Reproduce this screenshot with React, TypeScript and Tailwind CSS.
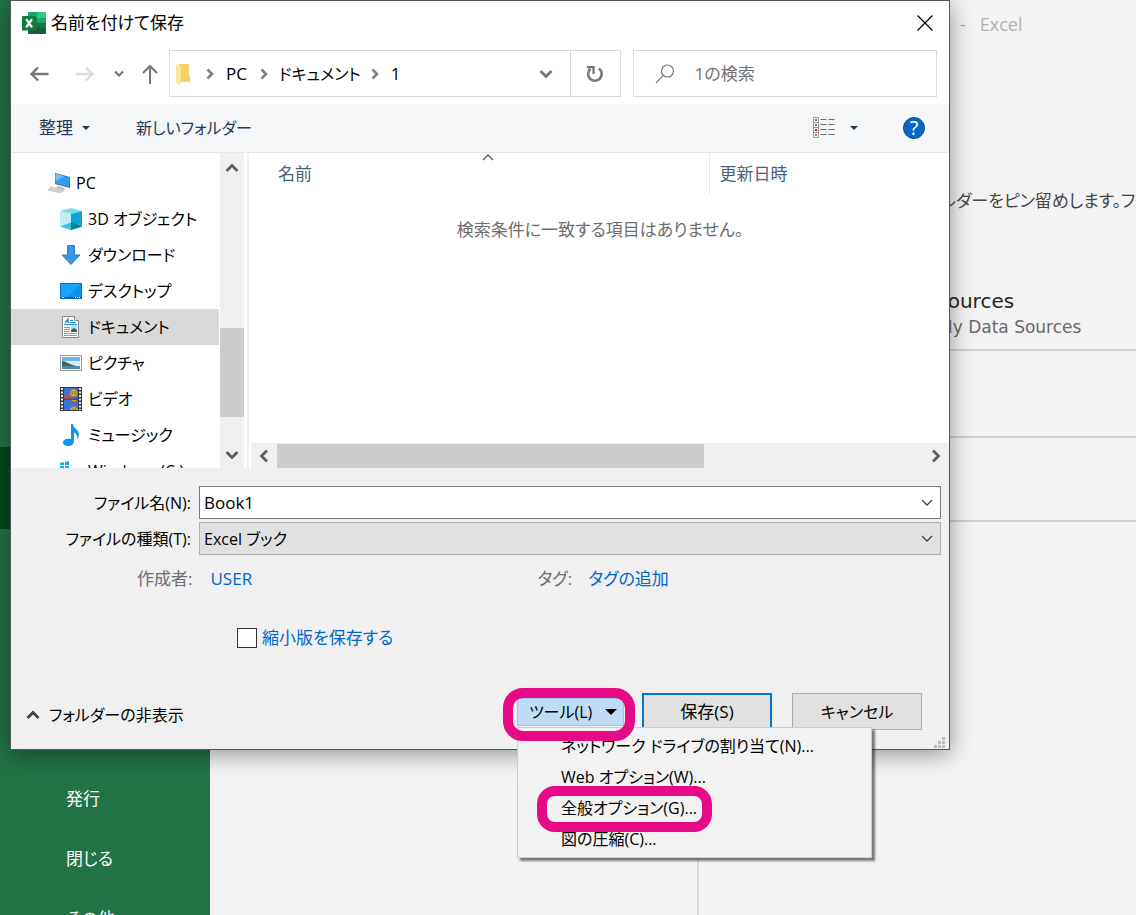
import React from "react";

type IconProps = { className?: string };

function ExcelIcon() {
  return (
    <svg width="24" height="22" viewBox="0 0 24 22" aria-hidden="true">
      <path d="M6 1a1 1 0 0 1 1-1h8v6H6z" fill="#21a366" />
      <path d="M15 0h8a1 1 0 0 1 1 1v5h-9z" fill="#33c481" />
      <path d="M6 6h9v5H6z" fill="#107c41" />
      <path d="M15 6h9v5h-9z" fill="#21a366" />
      <path d="M6 11h9v5H6z" fill="#185c37" />
      <path d="M15 11h9v5h-9z" fill="#107c41" />
      <path d="M6 16h18v5a1 1 0 0 1-1 1H7a1 1 0 0 1-1-1z" fill="#185c37" />
      <rect y="4" width="14.500" height="14.500" rx="1" fill="#107c41" />
      <path d="M4.200 7.200 10 15.400M10 7.200 4.200 15.400" stroke="#fff" strokeWidth="2.200" />
    </svg>
  );
}

function Chevron({ className }: IconProps) {
  return (
    <svg width="16" height="16" viewBox="0 0 16 16" fill="none" stroke="currentColor" className={className} aria-hidden="true">
      <path d="M2.500 5 8 10.500 13.500 5" strokeWidth="2.800" />
    </svg>
  );
}

function ThinChevron({ className }: IconProps) {
  return (
    <svg width="12" height="8" viewBox="0 0 12 8" fill="none" stroke="currentColor" className={className} aria-hidden="true">
      <path d="M1 1 6 6 11 1" strokeWidth="1.300" />
    </svg>
  );
}

function Crumb() {
  return (
    <svg width="8" height="12" viewBox="0 0 8 12" fill="none" aria-hidden="true">
      <path d="M1.500 1.500 6 6 1.500 10.500" stroke="#808080" strokeWidth="2.600" />
    </svg>
  );
}

function Triangle({ className }: IconProps) {
  return (
    <svg width="8" height="4" viewBox="0 0 8 4" className={className} aria-hidden="true">
      <path d="M0 0h8L4 4z" fill="currentColor" />
    </svg>
  );
}

function PcIcon() {
  return (
    <svg width="24" height="22" viewBox="0 0 24 22" aria-hidden="true">
      <path d="M7 1 22 5v11L7 12z" fill="#5a6670" />
      <path d="M7.500 1.800 21.300 5.500v9.300L7.500 11.300z" fill="#2f9df4" />
      <path d="m7.500 1.800 9 2.400-9 5z" fill="#6cc0fb" />
      <path d="m10 14 7 2-1 2-8-2z" fill="#b8bec4" />
      <path d="m3 15 13 3.500-4 2.500-12-3z" fill="#cdd1d5" stroke="#a5abb1" strokeWidth=".7" strokeDasharray="2 1" />
    </svg>
  );
}

function CubeIcon() {
  return (
    <svg width="22" height="22" viewBox="0 0 22 22" aria-hidden="true">
      <path d="M0 3 11 0l11 3-11 3z" fill="#7fdde3" />
      <path d="M0 3 11 6v16L0 18.500z" fill="#bdeef1" />
      <path d="M22 3 11 6v16l11-3.500z" fill="#0ba4dc" />
      <path d="m0 18.500 11-4V22z" fill="#35c5dc" />
      <path d="m22 18.500-11-4V22z" fill="#077f99" />
    </svg>
  );
}

function DownloadIcon() {
  return (
    <svg width="22" height="22" viewBox="0 0 22 22" aria-hidden="true">
      <path d="M7.500 1.500h7V11H20l-9 9.500L2 11h5.500z" fill="#3a96e8" stroke="#2a7dcb" />
    </svg>
  );
}

function DesktopIcon() {
  return (
    <svg width="22" height="22" viewBox="0 0 22 22" aria-hidden="true">
      <rect x=".5" y="3.500" width="21" height="15" fill="#1ba3fc" stroke="#0d6fb8" />
      <path d="m21 4-14 13h14z" fill="#0a93f2" />
      <path d="M1 17.500h20" stroke="#075a9c" />
      <path d="M2 17.500h2M15 17.500h1M17 17.500h1M19 17.500h1" stroke="#fff" />
    </svg>
  );
}

function DocumentIcon() {
  return (
    <svg width="22" height="22" viewBox="0 0 22 22" aria-hidden="true">
      <path d="M2.500.5h12l4 4v17h-16z" fill="#fff" stroke="#8a8a8a" />
      <path d="M14.500.5v4h4" fill="#e6e6e6" stroke="#8a8a8a" />
      <path d="m5 7 3-4v4" fill="none" stroke="#2b86cf" strokeWidth="1.300" />
      <path d="M10 4.500h3M10 6.500h6M4 8.500h13" stroke="#2196e3" />
      <path d="M4 11.500h6M4 13.500h6M4 15.500h6M4 17.500h13M4 19.500h13" stroke="#9b9b9b" />
      <path d="M11 10h6v6h-6z" fill="#b9dcf5" />
      <path d="m11 14 3-2 3 2v2h-6z" fill="#34597a" />
    </svg>
  );
}

function PictureIcon() {
  return (
    <svg width="22" height="22" viewBox="0 0 22 22" aria-hidden="true">
      <rect x=".5" y="3.500" width="21" height="15" fill="#fff" stroke="#9a9a9a" />
      <path d="M2 5h18v12H2z" fill="#72b2ea" />
      <path d="M2 9h18v5H2z" fill="#d9ecf7" />
      <path d="M2 9c4 .5 7 3 14 5H2z" fill="#3a6a4b" />
      <path d="M2 14h18v3H2z" fill="#4f8aa8" />
    </svg>
  );
}

function VideoIcon() {
  return (
    <svg width="22" height="24" viewBox="0 0 22 24" aria-hidden="true">
      <path d="M0 0h22v24H0z" fill="#3a3a3a" />
      <path d="M2 1v22M20 1v22" stroke="#e9e9e9" strokeWidth="2" strokeDasharray="2 1.500" />
      <path d="M4 1h14v10.500H4zM4 12.500h14V23H4z" fill="#3c74d8" />
      <circle cx="13.500" cy="6" r="3.500" fill="#e5b61f" />
      <path d="M4 10c2-4 3-2 6 0l4-1v2.500H4z" fill="#d94a35" />
      <path d="M12 4v4M15 4v4" stroke="#8c4a10" />
      <path d="M11 13h6l-3 4z" fill="#d8482f" />
      <path d="M11.500 13h5L14 14.500z" fill="#e5b61f" />
      <path d="M10.500 23a3.500 3.500 0 0 1 7 0z" fill="#e5b61f" />
      <path d="M13 20v3M15.500 20v3" stroke="#d8482f" />
    </svg>
  );
}

function MusicIcon() {
  return (
    <svg width="22" height="22" viewBox="0 0 22 22" aria-hidden="true">
      <path d="M11 0h2c.5 5 6 5 6 11 0 2-.8 3-2 4.500.8-4-.5-6-3-7V17c0 3-2.500 5-6 5-3 0-5-1.300-5-3.500C3 15.500 7 14 11 15z" fill="#0f96ee" />
    </svg>
  );
}

function DriveIcon() {
  return (
    <svg width="22" height="22" viewBox="0 0 22 22" aria-hidden="true">
      <path d="m0 3 4-1v3H0zM5 2l4-1v4H5zM0 6h4v3H0zM5 6h4v4H5z" fill="#11a9ef" />
      <path d="M0 11h22v7H0z" fill="#a7adb2" />
    </svg>
  );
}

const places = [
  { name: "3D オブジェクト", icon: <CubeIcon /> },
  { name: "ダウンロード", icon: <DownloadIcon /> },
  { name: "デスクトップ", icon: <DesktopIcon /> },
  { name: "ドキュメント", icon: <DocumentIcon />, selected: true },
  { name: "ピクチャ", icon: <PictureIcon /> },
  { name: "ビデオ", icon: <VideoIcon /> },
  { name: "ミュージック", icon: <MusicIcon /> },
  { name: "Windows (C:)", icon: <DriveIcon /> },
];

const toolItems = [
  { name: "ネットワーク ドライブの割り当て(N)..." },
  { name: "Web オプション(W)..." },
  { name: "全般オプション(G)...", marked: true },
  { name: "図の圧縮(C)..." },
];

function Backstage() {
  return (
    <div className="flex h-full">
      <nav className="flex w-[210px] shrink-0 flex-col overflow-hidden bg-[#217346] text-[17px] text-white">
        <div className="h-[447px] shrink-0" />
        <div className="h-[82px] shrink-0 bg-[#004b1c]" />
        <div className="h-60 shrink-0" />
        {["発行", "閉じる", "その他"].map((name) => (
          <a key={name} href="#" className="flex h-[60px] shrink-0 items-center pl-[66px]">
            {name}
          </a>
        ))}
      </nav>
      <main className="flex min-w-0 flex-1 flex-col bg-[#f3f3f3]">
        <div className="flex h-12 shrink-0 items-center gap-[14px] pl-[750px] text-lg text-[#b1b1b1]">
          <span>-</span>
          <span>Excel</span>
        </div>
        <div className="flex h-[303px] shrink-0 flex-col justify-between overflow-hidden whitespace-nowrap border-b-2 border-[#d0d0d0] pt-[139px]">
          <p className="pl-[730px] text-[17px] leading-7 text-[#444]">ルダーをピン留めします。フォルダー</p>
          <div className="flex flex-col pb-[10px] font-['DejaVu_Sans']">
            <span className="pl-[725px] text-xl leading-7 text-[#262626]">Sources</span>
            <span className="pl-[728px] text-[17px] leading-6 text-[#6a6a6a]">My Data Sources</span>
          </div>
        </div>
        <div className="h-[87px] shrink-0 border-b-2 border-[#d0d0d0]" />
        <div className="h-[84px] shrink-0 border-b-2 border-[#d0d0d0]" />
        <div className="w-[489px] flex-1 border-r-2 border-[#d9d9d9]" />
      </main>
    </div>
  );
}

function AddressRow() {
  return (
    <div className="flex h-[47px] items-stretch pl-[18px] pr-[12px]">
      <div className="mr-2 flex items-center text-[#777]">
        <button aria-label="戻る" className="w-[46px]">
          <svg width="20" height="16" viewBox="0 0 20 16" fill="none" stroke="currentColor" strokeWidth="2.400"><path d="M19.500 8H2M9 1.500 2.500 8 9 14.500" /></svg>
        </button>
        <button aria-label="進む" className="w-[39px] text-[#dcdcdc]">
          <svg width="20" height="16" viewBox="0 0 20 16" fill="none" stroke="currentColor" strokeWidth="2.400"><path d="M.5 8H18M11 1.500 17.500 8 11 14.500" /></svg>
        </button>
        <button aria-label="最近表示した場所" className="w-7">
          <svg width="10" height="8" viewBox="0 0 10 8" fill="none" stroke="currentColor" strokeWidth="2.200"><path d="m1 1.500 4 4 4-4" /></svg>
        </button>
        <button aria-label="上へ" className="w-4">
          <svg width="16" height="20" viewBox="0 0 16 20" fill="none" stroke="currentColor" strokeWidth="2"><path d="M8 20V2M1 9l7-7 7 7" /></svg>
        </button>
      </div>
      <div className="ml-[3px] flex min-w-0 flex-[452] items-stretch border border-[#d9d9d9]">
        <div className="flex flex-1 items-center">
          <svg width="14" height="22" viewBox="0 0 14 22" className="ml-[6px]" aria-hidden="true">
            <path d="M3 1h10v12h1v6H3z" fill="#f5d069" />
            <path d="M0 1l5 2v16l-1 3-4-2z" fill="#ffe59a" />
          </svg>
          <span className="w-4" />
          <Crumb />
          <span className="ml-3 mr-[13px]">PC</span>
          <Crumb />
          <span className="ml-[11px] mr-[10px] text-base">ドキュメント</span>
          <Crumb />
          <span className="ml-3">1</span>
          <button aria-label="以前の場所" className="ml-auto mr-4 text-[#777]"><Chevron /></button>
        </div>
        <button aria-label="最新の情報に更新" className="flex w-[50px] items-center justify-center border-l border-[#d9d9d9]">
          <svg width="18" height="18" viewBox="0 0 18 18" fill="none" stroke="#777" strokeWidth="2.600">
            <path d="M13 3.500a6.800 6.800 0 1 1-8.500.3" />
            <path d="M1 2.200h6.500V9" strokeWidth="2.200" />
          </svg>
        </button>
      </div>
      <label className="ml-3 flex min-w-0 flex-[304] items-center border border-[#d9d9d9]">
        <svg width="20" height="20" viewBox="0 0 20 20" fill="none" stroke="#777" strokeWidth="1.200" className="ml-[21px] shrink-0" aria-hidden="true">
          <circle cx="12.500" cy="7" r="6" />
          <path d="m8.200 11.300-7.200 7.500" />
        </svg>
        <input aria-label="1の検索" placeholder="1の検索" className="ml-5 min-w-0 flex-1 bg-transparent outline-none placeholder:text-[#737373]" />
      </label>
    </div>
  );
}

function Toolbar() {
  return (
    <div className="mt-[7px] flex h-[49px] items-center border-b border-[#e4e7eb] bg-[#f5f6f7] pl-7 pr-6 text-[#1e395b]">
      <button className="flex items-center gap-[9px]">
        整理
        <Triangle />
      </button>
      <button className="ml-[46px] text-base">新しいフォルダー</button>
      <button aria-label="表示方法の変更" className="ml-auto flex items-center gap-[15px]">
        <svg width="22" height="22" viewBox="0 0 22 22" fill="none" aria-hidden="true">
          <path d="M.5.500h5v20h-5zM.5 5.500h5M.5 10.500h5M.5 15.500h5" stroke="#9a9a9a" />
          <path d="M7.500 2.500h6M15.500 2.500h6M7.500 7.500h6M15.500 7.500h6M7.500 12.500h6M15.500 12.500h6M7.500 17.500h6M15.500 17.500h6" stroke="#707070" />
          <path d="M2 2h2v2H2z" fill="#3b78b8" />
          <path d="M2 7h2v2H2z" fill="#a5673f" />
          <path d="M2 12h2v2H2z" fill="#c01818" />
          <path d="M2 17h2v2H2z" fill="#78a83c" />
        </svg>
        <Triangle />
      </button>
      <button aria-label="ヘルプ" className="ml-[45px] flex size-[22px] items-center justify-center rounded-full border border-[#064a86] bg-[#0468c8] text-xl leading-5 text-white">
        ?
      </button>
    </div>
  );
}

function Browser() {
  return (
    <div className="flex h-[315px] bg-white">
      <div className="flex w-[209px] shrink-0 flex-col overflow-hidden pr-px pt-3 text-base">
        <button className="flex h-9 shrink-0 items-center gap-1 pl-[37px]">
          <PcIcon />
          PC
        </button>
        {places.map((place) => (
          <button
            key={place.name}
            className={
              place.selected
                ? "flex h-9 shrink-0 items-center gap-[6px] bg-[#d9d9d9] pl-[49px]"
                : "flex h-9 shrink-0 items-center gap-[6px] pl-[49px]"
            }
          >
            {place.icon}
            {place.name}
          </button>
        ))}
      </div>
      <div className="flex w-6 shrink-0 flex-col items-center bg-[#f0f0f0] text-[#606060]">
        <button aria-label="上へスクロール" className="flex h-[30px] items-center"><Chevron className="rotate-180" /></button>
        <div className="h-[145px]" />
        <div className="h-[89px] w-full bg-[#cdcdcd]" />
        <div className="flex-1" />
        <button aria-label="下へスクロール" className="flex h-[26px] items-center"><Chevron /></button>
      </div>
      <div className="ml-[3px] mr-[2px] w-[2px] shrink-0 bg-[#f0f0f0]" />
      <div className="flex min-w-0 flex-1 flex-col">
        <table className="w-full table-fixed border-collapse text-left text-[#4c607a]">
          <colgroup>
            <col className="w-[458px]" />
            <col />
          </colgroup>
          <thead>
            <tr className="h-[41px]">
              <th className="relative border-r border-[#e5e5e5] pl-[27px] font-normal" aria-sort="ascending">
                名前
                <ThinChevron className="absolute left-[231px] top-0 rotate-180 text-[#555]" />
              </th>
              <th className="pl-[10px] font-normal">更新日時</th>
            </tr>
          </thead>
          <tbody>
            <tr className="h-[72px] text-center text-[#6d6d6d]">
              <td colSpan={2}>検索条件に一致する項目はありません。</td>
            </tr>
          </tbody>
        </table>
        <div className="mt-auto flex h-[25px] items-center bg-[#f0f0f0] text-[#606060]">
          <button aria-label="左へスクロール" className="flex w-[26px] justify-center"><Chevron className="rotate-90" /></button>
          <div className="h-6 w-[427px] bg-[#cdcdcd]" />
          <button aria-label="右へスクロール" className="ml-auto mr-[5px]"><Chevron className="-rotate-90" /></button>
        </div>
      </div>
    </div>
  );
}

function Details() {
  return (
    <div className="grid grid-cols-[188px_1fr] gap-y-[3px] pr-2 pt-[18px]">
      <label htmlFor="file-name" className="self-center pr-2 text-right text-base">ファイル名(N):</label>
      <div className="flex h-[33px] items-center border border-[#7a7a7a] bg-white pr-[7px] text-[#404040]">
        <input id="file-name" defaultValue="Book1" className="min-w-0 flex-1 bg-transparent pl-1 text-black outline-none" />
        <ThinChevron />
      </div>
      <label htmlFor="file-type" className="self-center pr-2 text-right text-base">ファイルの種類(T):</label>
      <div className="relative flex h-[33px] items-center border border-[#adadad] bg-[#e1e1e1] text-[#404040]">
        <select id="file-type" className="size-full appearance-none bg-transparent pl-1 text-base text-black outline-none">
          <option>Excel ブック</option>
        </select>
        <ThinChevron className="pointer-events-none absolute right-[7px]" />
      </div>
    </div>
  );
}

function ToolsMenu() {
  return (
    <div className="relative text-base">
      <button
        aria-haspopup="menu"
        aria-expanded="true"
        className="flex h-7 w-[107px] items-center justify-between border border-[#90c8f6] bg-[#bfdcf4] pl-[11px] pr-[6px]"
      >
        ツール(L)
        <svg width="12" height="6" viewBox="0 0 12 6" aria-hidden="true"><path d="M0 0h12L6 6z" /></svg>
      </button>
      <ul
        role="menu"
        className="absolute left-0 top-[29px] z-10 w-[355px] border border-[#cccccc] bg-[#f2f2f2] pb-[2px] pt-[3px] shadow-[3px_3px_2px_rgba(0,0,0,0.5)]"
      >
        {toolItems.map((item) => (
          <li key={item.name} role="none" className="relative">
            <button role="menuitem" className="block h-[31px] w-full whitespace-nowrap pl-[43px] text-left leading-[31px]">
              {item.name}
            </button>
            {item.marked && (
              <span className="pointer-events-none absolute -top-[7px] left-[19px] z-20 h-[46px] w-[175px] rounded-[18px] border-10 border-[#e60a86]" />
            )}
          </li>
        ))}
      </ul>
      <span className="pointer-events-none absolute -left-[14px] -top-[10px] z-20 h-[53px] w-[132px] rounded-[20px] border-10 border-[#e60a86]" />
    </div>
  );
}

export default function App() {
  return (
    <div className="relative h-screen overflow-hidden font-['Open_Sans','Noto_Sans_CJK_JP',sans-serif] text-[17px] leading-6 text-black [font-feature-settings:'palt']">
      <Backstage />
      <section
        role="dialog"
        aria-label="名前を付けて保存"
        className="absolute left-[10px] right-[186px] top-0 border border-[#555] bg-white shadow-[0_4px_22px_rgba(0,0,0,0.4)]"
      >
        <header className="flex h-[49px] items-center gap-[5px] pb-[5px] pl-[11px] pr-4">
          <ExcelIcon />
          <h1>名前を付けて保存</h1>
          <button aria-label="閉じる" className="ml-auto">
            <svg width="16" height="16" viewBox="0 0 16 16" stroke="#000" strokeWidth="1.200"><path d="m.5.500 15 15M15.500.500l-15 15" /></svg>
          </button>
        </header>
        <AddressRow />
        <Toolbar />
        <Browser />
        <div className="bg-[#f0f0f0]">
          <Details />
          <div className="mt-3 flex pl-[126px]">
            <span className="text-[#6d6d6d]">作成者:</span>
            <a href="#" className="ml-[18px] w-[327px] text-[#0066cc]">USER</a>
            <span className="text-[#6d6d6d]">タグ:</span>
            <a href="#" className="ml-4 text-[#0066cc]">タグの追加</a>
          </div>
          <label className="ml-[226px] mt-[35px] flex w-fit items-center gap-[5px] text-[#0066cc]">
            <input type="checkbox" className="size-5 appearance-none border border-[#333] bg-white" />
            縮小版を保存する
          </label>
          <footer className="mt-[43px] flex h-14 items-start pl-[14px]">
            <button className="mt-[10px] flex items-center gap-2 text-base">
              <Chevron className="rotate-180 text-[#404040]" />
              フォルダーの非表示
            </button>
            <div className="ml-auto flex items-start">
              <div className="mr-[18px] mt-[5px]">
                <ToolsMenu />
              </div>
              <button className="h-[37px] w-[130px] border-2 border-[#0078d7] bg-[#e1e1e1]">保存(S)</button>
              <button className="ml-5 h-[37px] w-[130px] border border-[#adadad] bg-[#e1e1e1] text-base">キャンセル</button>
            </div>
            <svg width="12" height="12" viewBox="0 0 12 12" fill="#bdbdbd" className="ml-3 mr-[3px] self-end" aria-hidden="true">
              <path d="M8 0h3v3H8zM4 4h3v3H4zM8 4h3v3H8zM0 8h3v3H0zM4 8h3v3H4zM8 8h3v3H8z" />
            </svg>
          </footer>
        </div>
      </section>
    </div>
  );
}
